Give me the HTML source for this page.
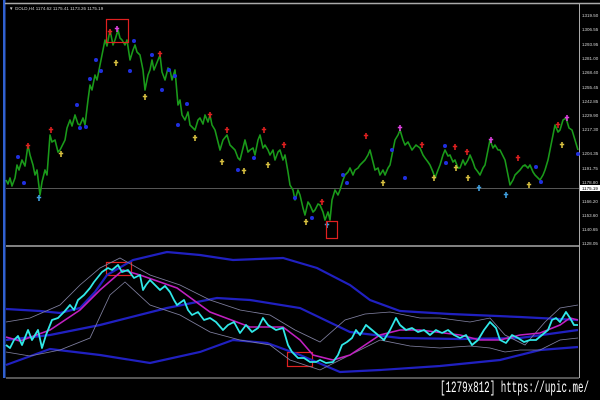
<!DOCTYPE html>
<html><head><meta charset="utf-8"><style>
html,body{margin:0;padding:0;background:#000;width:600px;height:400px;overflow:hidden}
svg{position:absolute;left:0;top:0}
.t{font-family:"Liberation Sans",sans-serif;font-size:4.5px;fill:#ccc}
.wm{position:absolute;left:440px;top:379px;font-family:"Liberation Mono",monospace;font-size:16px;line-height:18px;color:#fff;white-space:nowrap;transform:scaleX(0.575);transform-origin:0 0}
</style></head><body>
<svg width="600" height="400" viewBox="0 0 600 400">
<defs>
<g id="a"><path d="M0,-3V3M-2.2,-0.5H2.2" stroke-width="1.6"/></g>
</defs>
<rect x="3" y="0" width="2.5" height="378" fill="#3060d0"/>
<line x1="5" y1="3.5" x2="600" y2="3.5" stroke="#aaa" stroke-width="1.5"/>
<line x1="6" y1="246" x2="579" y2="246" stroke="#aaa" stroke-width="1.5"/>
<line x1="6" y1="378" x2="579" y2="378" stroke="#aaa" stroke-width="1"/>
<line x1="579.5" y1="4" x2="579.5" y2="378" stroke="#aaa" stroke-width="1"/>
<line x1="6" y1="188.5" x2="579" y2="188.5" stroke="#555" stroke-width="1"/>
<text x="9" y="10" class="t">▼ GOLD,H4  1174.62 1175.41 1173.26 1175.19</text>
<g class="t">
<text x="582" y="17">1319.50</text><text x="582" y="31">1306.55</text><text x="582" y="46">1293.95</text><text x="582" y="60">1281.00</text><text x="582" y="74">1268.40</text><text x="582" y="89">1255.45</text><text x="582" y="103">1242.85</text><text x="582" y="117">1229.90</text><text x="582" y="131">1217.30</text><text x="582" y="155">1204.35</text><text x="582" y="170">1191.75</text><text x="582" y="184">1178.80</text><text x="582" y="203">1166.20</text><text x="582" y="217">1153.60</text><text x="582" y="231">1140.65</text><text x="582" y="245">1128.05</text>
</g>
<rect x="580" y="185" width="20" height="6" fill="#fff"/><text x="582" y="190" class="t" style="fill:#000">1175.19</text>
<polyline fill="none" stroke="#1a9a1a" stroke-width="1.6" stroke-linejoin="round" points="6,180 8,184 10,178 12,186 15,178 17,165 19,170 22,160 25,166 28,145 30,155 33,165 35,175 37,170 40,195 42,182 45,170 47,175 50,135 52,142 55,140 58,152 60,150 63,144 65,140 67,128 70,120 72,126 75,115 78,124 80,125 83,118 85,125 88,100 90,85 92,90 95,75 97,80 100,65 103,50 105,40 107,46 110,30 113,45 115,40 118,30 120,38 122,40 125,45 127,40 130,60 133,50 135,45 137,52 140,55 143,70 145,90 148,75 150,70 152,60 154,70 156,65 160,55 162,72 165,80 168,68 170,70 172,80 175,70 178,105 180,100 182,115 185,120 188,112 190,125 193,128 195,130 198,120 200,118 203,124 205,115 208,122 210,115 212,125 215,130 218,142 220,150 223,140 227,135 230,145 235,150 238,158 240,160 243,148 245,140 248,152 250,150 253,148 255,155 258,140 260,135 263,148 265,145 268,150 270,155 273,150 275,160 278,152 280,150 283,160 285,155 288,172 290,185 293,190 295,200 298,190 300,195 303,208 305,215 308,202 310,205 313,212 315,210 318,204 320,205 323,212 325,220 328,212 330,220 332,200 335,190 338,195 340,190 343,180 345,175 348,172 350,168 353,175 355,170 358,168 360,165 363,162 365,160 368,155 370,150 373,162 375,170 378,168 380,175 383,170 385,175 388,168 390,165 393,150 395,140 398,135 400,130 403,140 405,145 408,142 412,150 416,145 420,148 423,155 425,158 428,162 430,165 433,172 435,178 438,170 440,165 443,155 445,150 448,156 450,155 453,162 455,160 458,168 460,168 463,160 465,165 468,160 470,155 473,162 475,168 478,172 480,175 483,168 485,165 488,150 490,140 493,148 495,145 498,150 500,150 503,156 505,160 508,175 510,185 513,180 515,175 518,172 520,170 523,166 525,165 528,168 530,165 533,172 535,175 538,178 540,180 543,175 545,170 548,160 550,150 553,135 555,125 558,132 560,130 563,120 566,118 569,128 572,130 575,140 578,150"/>
<g stroke="#e02020" fill="none"><use href="#a" x="28" y="146"/><use href="#a" x="51" y="130"/><use href="#a" x="110" y="32"/><use href="#a" x="160" y="54"/><use href="#a" x="210" y="115"/><use href="#a" x="227" y="130"/><use href="#a" x="264" y="130"/><use href="#a" x="284" y="145"/><use href="#a" x="322" y="202"/><use href="#a" x="366" y="136"/><use href="#a" x="422" y="145"/><use href="#a" x="455" y="147"/><use href="#a" x="467" y="152"/><use href="#a" x="518" y="158"/><use href="#a" x="558" y="125"/></g>
<g stroke="#e040e0" fill="none"><use href="#a" x="117" y="29"/><use href="#a" x="400" y="128"/><use href="#a" x="491" y="140"/><use href="#a" x="567" y="118"/></g>
<g stroke="#d8c040" fill="none"><use href="#a" x="61" y="154"/><use href="#a" x="116" y="63"/><use href="#a" x="145" y="97"/><use href="#a" x="195" y="138"/><use href="#a" x="222" y="162"/><use href="#a" x="244" y="171"/><use href="#a" x="268" y="165"/><use href="#a" x="306" y="222"/><use href="#a" x="383" y="183"/><use href="#a" x="434" y="178"/><use href="#a" x="456" y="168"/><use href="#a" x="468" y="178"/><use href="#a" x="529" y="185"/><use href="#a" x="562" y="145"/></g>
<g stroke="#40a0e0" fill="none"><use href="#a" x="39" y="198"/><use href="#a" x="327" y="225"/><use href="#a" x="479" y="188"/><use href="#a" x="506" y="195"/></g>
<g fill="#2030e0"><circle cx="18" cy="157" r="2"/><circle cx="24" cy="183" r="2"/><circle cx="77" cy="105" r="2"/><circle cx="80" cy="128" r="2"/><circle cx="86" cy="127" r="2"/><circle cx="96" cy="60" r="2"/><circle cx="101" cy="71" r="2"/><circle cx="90" cy="79" r="2"/><circle cx="134" cy="41" r="2"/><circle cx="130" cy="71" r="2"/><circle cx="152" cy="55" r="2"/><circle cx="162" cy="90" r="2"/><circle cx="169" cy="70" r="2"/><circle cx="175" cy="76" r="2"/><circle cx="187" cy="104" r="2"/><circle cx="178" cy="125" r="2"/><circle cx="238" cy="170" r="2"/><circle cx="254" cy="158" r="2"/><circle cx="295" cy="198" r="2"/><circle cx="312" cy="218" r="2"/><circle cx="343" cy="175" r="2"/><circle cx="347" cy="183" r="2"/><circle cx="392" cy="150" r="2"/><circle cx="405" cy="178" r="2"/><circle cx="445" cy="146" r="2"/><circle cx="446" cy="163" r="2"/><circle cx="536" cy="167" r="2"/><circle cx="541" cy="182" r="2"/><circle cx="578" cy="154" r="2"/></g>
<g fill="none" stroke="#e02020" stroke-width="1.2"><rect x="106.5" y="19.5" width="22" height="23"/><rect x="326.5" y="221.5" width="11" height="17"/><rect x="106.5" y="262.5" width="25" height="13"/><rect x="287.5" y="352.5" width="25" height="14"/></g>
<!-- bottom pane -->
<g fill="none" stroke="#2020c0" stroke-width="2.2">
<polyline points="6,309 40,311 60,313 80,308 95,292 107,275 133,260 167,252 200,255 233,260 283,258 317,268 350,285 370,300 400,311 450,314 520,317 578,320"/>
<polyline points="6,340 50,335 100,325 167,308 217,298 250,300 300,308 350,332 400,338 460,339 520,338 578,330"/>
<polyline points="6,365 50,349 100,355 150,363 200,352 233,340 267,343 300,355 340,372 380,370 440,366 500,360 540,350 578,347"/>
</g>
<g fill="none" stroke="#8080a0" stroke-width="0.8">
<polyline points="6,322 30,318 60,305 80,285 100,268 120,258 150,275 180,285 210,300 240,310 270,315 295,330 320,342 345,320 365,314 390,312 420,318 440,318 470,322 490,318 505,335 525,345 545,322 560,308 578,305"/>
<polyline points="6,352 30,356 60,350 90,338 110,295 125,282 150,305 180,315 210,332 240,340 270,345 290,360 320,370 350,355 380,340 410,346 440,348 470,346 490,348 505,352 520,350 540,350 560,340 578,338"/>
</g>
<polyline fill="none" stroke="#c020c0" stroke-width="1.6" points="6,337 20,341 50,330 80,310 100,290 123,270 140,275 177,288 210,312 250,327 283,327 300,340 313,355 333,360 350,355 365,345 380,335 400,330 420,330 460,335 480,340 500,340 520,335 540,333 560,325 570,318 578,320"/>
<polyline fill="none" stroke="#30e8e8" stroke-width="1.8" stroke-linejoin="round" points="6,345 10,348 14,340 18,336 22,345 28,330 32,340 38,330 42,348 46,335 52,320 58,318 64,312 70,305 74,310 78,300 84,295 90,288 94,282 98,277 102,272 108,268 112,270 118,265 122,272 128,270 134,278 140,275 143,290 146,285 150,280 155,285 160,290 165,286 170,292 174,300 177,305 184,300 188,310 192,315 198,312 204,320 210,318 216,322 223,330 228,325 234,322 240,333 246,325 252,332 258,328 263,318 268,325 276,330 283,328 288,345 292,352 298,358 304,358 310,362 316,362 320,360 326,363 333,362 338,355 342,345 347,342 352,338 356,330 360,335 366,325 372,330 378,335 384,340 390,330 396,318 400,325 406,330 412,328 418,332 424,330 430,335 436,330 442,333 448,330 454,335 460,338 466,335 472,345 478,340 484,330 490,322 496,328 500,340 506,343 512,335 518,338 524,342 530,340 536,340 542,335 548,330 552,320 556,318 560,322 566,312 570,318 574,325 578,325"/>
</svg>
<div class="wm">[1279x812] https://upic.me/</div>
</body></html>
